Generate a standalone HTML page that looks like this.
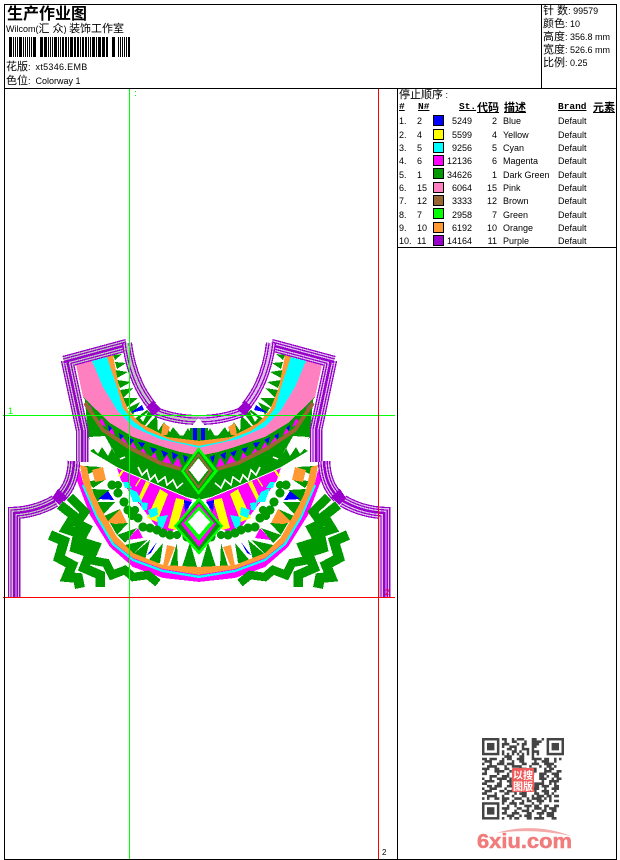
<!DOCTYPE html>
<html lang="zh">
<head>
<meta charset="utf-8">
<title>生产作业图</title>
<style>
html,body{margin:0;padding:0;background:#fff}
#p{position:relative;width:620px;height:860px;overflow:hidden;background:#fff;color:#000;font:9px/12px "Liberation Sans","WenQuanYi Zen Hei","Noto Sans CJK SC",sans-serif}
#p>div,#p>svg{position:absolute}
.l{background:#000}
.t{white-space:nowrap}
.c{font-size:11px}
.r{text-align:right}
.h{font:bold 9.5px/12px "Liberation Mono","WenQuanYi Zen Hei","Noto Sans CJK SC",monospace;text-decoration:underline;white-space:nowrap}
.h .c{font-family:"WenQuanYi Zen Hei","Noto Sans CJK SC",sans-serif;font-size:11px}
.s{width:9px;height:9px;border:1px solid #000}
</style>
</head>
<body>
<div id="p">
<svg style="left:0;top:0" width="620" height="860" viewBox="0 0 620 860">
<defs>
<g id="st" fill="none" stroke-linejoin="miter" stroke-miterlimit="6">
<path d="M64,362 L127,345"/>
<path d="M67,360 L82,430 L82,462"/>
<path d="M74,461 Q73,485 60,497"/>
<path d="M14,597 L14,513 Q36,512 55,501"/>
</g>
<g id="st2" fill="none" stroke-linejoin="miter" stroke-miterlimit="6">
<path d="M127,343 Q132,382 152,406"/>
<path d="M156,412 Q176,420 199,420"/>
</g>
<g id="art" shape-rendering="crispEdges">
<!-- neck teeth -->
<g fill="#009900">
<polygon points="113,355 122,354 115,360"/>
<polygon points="115,362 126,363 117,369"/>
<polygon points="115,370 128,372 117,378"/>
<polygon points="117,380 131,382 120,388"/>
<polygon points="120,390 133,388 123,398"/>
<polygon points="123,398 138,398 127,407"/>
<polygon points="128,408 140,402 133,415"/>
<polygon points="133,420 147,410 153,415 143,428"/>
<polygon points="143,430 157,415 158,434"/>
<polygon points="156,434 164,422 172,436"/>
<polygon points="168,436 173,427 182,438"/>
<polygon points="182,438 188,428 195,440"/>
<polygon points="160,435 200,436 200,442 170,439"/>
<polygon points="190,428 200,428 200,442 190,442"/>
</g>
<polygon points="130,413 142,405 144,410" fill="#0000ff"/>
<polygon points="193,428 197,428 197,440 193,440" fill="#0000ff"/>
<polygon points="161,435 163,423 170,427 167,435" fill="#ff9933"/>
<polygon points="140,418 148,412 143,422" fill="#fff"/>
<!-- big green -->
<polygon points="85,400 83,397 110,423 133,437 163,447 180,452 200,456 200,500 187,497 163,487 130,473 117,467 90,451 95,448 88,437" fill="#009900"/>
<polygon points="89,437 105,436 116,456 112,448 108,456 102,447 98,454 92,447" fill="#fff"/>
<!-- yoke bands -->
<polygon points="76,365 92,361 103,387 117,410 133,427 160,438 200,447 200,456 180,452 163,447 133,437 110,423 83,397" fill="#ff80c0"/>
<polygon points="92,361 107,357 117,387 123,408 133,420 147,430 173,440 200,445 200,448 160,439 133,427 117,410 103,387" fill="#00ffff"/>
<polygon points="107,357 113,355 119,387 128,410 140,423 167,437 200,441 200,446 173,441 147,431 133,421 123,408 117,387" fill="#ff9933"/>
<!-- magenta triangles -->
<g fill="#ff00ff">
<polygon points="87,410 90,405 94,414"/>
<polygon points="98,423 102,418 106,427"/>
<polygon points="108,433 112,428 115,435"/>
<polygon points="120,442 123,437 128,444"/>
<polygon points="130,447 133,442 138,451"/>
<polygon points="139,453 143,448 148,456"/>
<polygon points="150,458 155,452 158,461"/>
<polygon points="162,462 167,455 172,464"/>
<polygon points="173,465 178,457 182,467"/>
</g>
<g fill="#0000ff">
<polygon points="108,425 112,428 109,431"/>
<polygon points="119,433 124,436 120,439"/>
<polygon points="128,437 134,440 130,444"/>
<polygon points="138,442 145,443 142,448"/>
<polygon points="150,447 157,449 153,453"/>
<polygon points="161,450 168,453 164,457"/>
<polygon points="172,452 178,455 173,460"/>
<polygon points="183,455 188,457 185,463"/>
</g>
<polyline points="85,403 103,430 130,448 160,463 181,469" fill="none" stroke="#996633" stroke-width="4"/>
<polyline points="138,467 142,475 147,470 150,480 155,475 158,482 165,477 167,485 173,480 177,488 183,483" fill="none" stroke="#fff" stroke-width="1.6"/>
<line x1="120" y1="459" x2="125" y2="457" stroke="#fff" stroke-width="1.6"/>
<!-- fan -->
<polygon points="117,468 121,480 128,490 140,505 155,525 170,532 178,528 187,512 192,500 187,498 163,488 130,474" fill="#ff00ff"/>
<g fill="#ffff00">
<polygon points="176,498 185,500 176,530 168,528"/>
<polygon points="160,489 168,494 157,522 147,518"/>
<polygon points="146,481 150,483 140,503 137,501"/>
<polygon points="118,476 122,470 124,471 120,477"/>
<polygon points="135,486 140,478 141,479 136,487"/>
</g>
<g fill="#00ffff">
<polygon points="123,482 128,482 132,488 125,488"/>
<polygon points="128,488 137,492 142,502 133,502"/>
<polygon points="140,502 148,503 147,510 143,510"/>
<polygon points="148,510 157,507 158,515 150,518"/>
<polygon points="157,517 168,515 163,528 158,527"/>
</g>
<polygon points="184,500 192,502 185,512" fill="#0000ff"/>
<!-- blobs -->
<g fill="#009900">
<circle cx="112" cy="485" r="4.5"/><circle cx="118" cy="485" r="4"/><circle cx="118" cy="493" r="4.5"/>
<circle cx="124" cy="502" r="4.5"/><circle cx="128" cy="510" r="4.5"/><circle cx="135" cy="510" r="4"/>
<circle cx="132" cy="516" r="4"/><circle cx="138" cy="518" r="4.5"/><circle cx="143" cy="527" r="4.5"/>
<circle cx="150" cy="528" r="4.5"/><circle cx="157" cy="530" r="4.5"/><circle cx="163" cy="533" r="4.5"/>
<circle cx="170" cy="535" r="4.5"/><circle cx="177" cy="535" r="4"/><circle cx="187" cy="537" r="4.5"/>
</g>
<!-- bib teeth -->
<g fill="#009900">
<polygon points="84,466 101,467 87,475"/>
<polygon points="88,481 105,480 93,488"/>
<polygon points="92,489 110,490 97,502"/>
<polygon points="96,502 115,502 103,515"/>
<polygon points="104,516 120,509 110,523"/>
<polygon points="110,523 128,523 117,535"/>
<polygon points="117,535 137,528 125,543"/>
<polygon points="125,545 147,540 132,555"/>
<polygon points="132,555 150,540 145,560"/>
<polygon points="147,562 163,543 160,563"/>
<polygon points="170,566 177,543 178,567"/>
<polygon points="182,567 190,542 197,567"/>
</g>
<polygon points="92,470 103,467 106,480 95,482" fill="#ff9933"/>
<polygon points="107,522 120,509 127,523 115,524" fill="#ff9933"/>
<polygon points="163,566 167,545 175,547 168,565" fill="#ff9933"/>
<polygon points="98,499 108,491 114,500" fill="#0000ff"/>
<polygon points="147,555 157,542 151,553" fill="#0000ff"/>
<polygon points="127,540 138,528 143,538" fill="#ff00ff"/>
<!-- bib bands -->
<polygon points="76,478 90,515 110,547 133,567 163,578 200,582 200,575 163,568 133,558 113,542 97,515 83,483 80,470" fill="#ff00ff"/>
<polyline points="83,485 97,517 113,544 133,560 163,571 200,577" fill="none" stroke="#00ffff" stroke-width="2.4"/>
<polygon points="80,465 87,467 92,490 100,507 117,537 133,553 163,565 200,567 200,575 163,569 133,558 113,542 97,515 83,483" fill="#ff9933"/>
<!-- zigzags -->
<g fill="none" stroke="#009900" stroke-linejoin="miter" stroke-miterlimit="4">
<polyline stroke-width="8.5" points="70,497 85,512 77,523 87,528 80,541 96,546 90,560 106,563 112,575 125,570 133,577 148,575 158,583"/>
<polyline stroke-width="9.500" points="60,505 74,516 66,529 78,533 75,548 90,553 84,568 100,575 100,587"/>
<polyline stroke-width="10" points="50,535 64,541 59,558 72,565 67,577 78,578 80,588"/>
</g>
</g>
</defs>

<!-- left half -->
<use href="#art"/>
<!-- right half -->
<g transform="matrix(-1 0 0 1 398 0)"><use href="#art"/></g>

<!-- straps left -->
<g shape-rendering="crispEdges">
<use href="#st" stroke="#9900cc" stroke-width="12.5"/>
<use href="#st" stroke="#c4c4c4" stroke-width="10"/>
<use href="#st" stroke="#9900cc" stroke-width="7.5"/>
<use href="#st" stroke="#c4c4c4" stroke-width="5"/>
<use href="#st" stroke="#9900cc" stroke-width="2.5"/>
<use href="#st2" stroke="#9900cc" stroke-width="10"/>
<use href="#st2" stroke="#c4c4c4" stroke-width="7.5"/>
<use href="#st2" stroke="#9900cc" stroke-width="5"/>
<use href="#st2" stroke="#c4c4c4" stroke-width="2.5"/>
</g>
<!-- straps right -->
<g transform="matrix(-1 0 0 1 398 0)" shape-rendering="crispEdges">
<use href="#st" stroke="#9900cc" stroke-width="12.5"/>
<use href="#st" stroke="#dcc0ea" stroke-width="10"/>
<use href="#st" stroke="#9900cc" stroke-width="7.5"/>
<use href="#st" stroke="#dcc0ea" stroke-width="5"/>
<use href="#st" stroke="#9900cc" stroke-width="2.5"/>
<use href="#st2" stroke="#9900cc" stroke-width="10"/>
<use href="#st2" stroke="#dcc0ea" stroke-width="7.5"/>
<use href="#st2" stroke="#9900cc" stroke-width="5"/>
<use href="#st2" stroke="#dcc0ea" stroke-width="2.5"/>
</g>
<g fill="#9900cc" shape-rendering="crispEdges">
<polygon points="146,407 153,401 161,409 153,416"/>
<polygon points="252,407 245,401 237,409 245,416"/>
<polygon points="52,498 58,489 67,497 59,505"/>
<polygon points="346,498 340,489 331,497 339,505"/>
</g>
<polygon points="190,428 198.500,418 207,428" fill="#fff" shape-rendering="crispEdges"/>

<!-- diamonds -->
<g shape-rendering="crispEdges">
<polygon points="198.500,447 218,471 198.500,495 181,471" fill="#00ff00"/>
<polygon points="198.500,451 214,471 198.500,491 184,471" fill="#009900"/>
<polygon points="198.500,453 212,471 198.500,489 185,471" fill="#996633"/>
<polygon points="198.500,456 209,471 198.500,486 188,471" fill="#009900"/>
<polygon points="198.500,458 208,470 198.500,482 189,470" fill="#fff"/>
<polygon points="199,497 223,526 199,555 174,526" fill="#00ff00"/>
<polygon points="199,501 220,526 199,551 177,526" fill="#009900"/>
<polygon points="199,503 216,524 199,547 181,524" fill="#ff00ff"/>
<polygon points="199,506 214,523 199,541 184,523" fill="#00ff00"/>
<polygon points="199,510 210,522 199,535 188,522" fill="#fff"/>
</g>

<!-- guide lines -->
<g shape-rendering="crispEdges">
<rect x="129" y="89" width="1" height="770" fill="#00ff00"/>
<rect x="3" y="415" width="392" height="1" fill="#00ff00"/>
<rect x="3" y="597" width="392" height="1" fill="#ff0000"/>
<rect x="378" y="89" width="1" height="770" fill="#ff0000"/>
<rect x="135" y="91" width="1" height="1" fill="#00ff00"/>
<rect x="135" y="95" width="1" height="1" fill="#00ff00"/>
</g>

<!-- barcode -->
<path shape-rendering="crispEdges" fill="none" stroke="#000" stroke-width="20" d="M9 47h3M13 47h1M15 47h1M17 47h1M19 47h3M23 47h1M25 47h1M27 47h1M29 47h1M31 47h1M33 47h3M40 47h3M44 47h3M48 47h1M50 47h1M52 47h1M54 47h3M58 47h1M60 47h1M62 47h2M65 47h2M68 47h1M70 47h3M74 47h2M77 47h2M80 47h1M82 47h2M85 47h2M88 47h1M90 47h1M92 47h3M96 47h1M98 47h3M102 47h3M106 47h2M112 47h3M118 47h1M120 47h1M122 47h1M124 47h1M126 47h1M128 47h2"/>
</svg>

<!-- frame -->
<div class="l" style="left:4px;top:4px;width:613px;height:1px"></div>
<div class="l" style="left:4px;top:859px;width:613px;height:1px"></div>
<div class="l" style="left:4px;top:4px;width:1px;height:856px"></div>
<div class="l" style="left:616px;top:4px;width:1px;height:856px"></div>
<div class="l" style="left:4px;top:88px;width:613px;height:1px"></div>
<div class="l" style="left:541px;top:4px;width:1px;height:84px"></div>
<div class="l" style="left:397px;top:88px;width:1px;height:772px"></div>
<div class="l" style="left:397px;top:247px;width:220px;height:1px"></div>

<!-- header left -->
<div class="t" style="left:7px;top:3px;font-size:16px;line-height:18px;font-weight:bold;font-family:'Noto Sans CJK SC',sans-serif">生产作业图</div>
<div class="t" style="left:6px;top:23px">Wilcom(<span class="c">汇 众</span>) <span class="c">装饰工作室</span></div>
<div class="t" style="left:6px;top:61px"><span class="c">花版</span>: &nbsp;<span style="letter-spacing:.3px">xt5346.EMB</span></div>
<div class="t" style="left:6px;top:75px"><span class="c">色位</span>: &nbsp;Colorway 1</div>

<!-- header right -->
<div class="t" style="left:543px;top:5px"><span class="c">针 数</span>: 99579</div>
<div class="t" style="left:543px;top:18px"><span class="c">颜色</span>: 10</div>
<div class="t" style="left:543px;top:31px"><span class="c">高度</span>: 356.8 mm</div>
<div class="t" style="left:543px;top:44px"><span class="c">宽度</span>: 526.6 mm</div>
<div class="t" style="left:543px;top:57px"><span class="c">比例</span>: 0.25</div>

<!-- table header -->
<div class="t" style="left:399px;top:89px"><span class="c">停止顺序</span> :</div>
<div class="h" style="left:399px;top:101px">#</div>
<div class="h" style="left:418px;top:101px">N#</div>
<div class="h" style="left:459px;top:101px">St.</div>
<div class="h" style="left:477px;top:101px"><span class="c">代码</span></div>
<div class="h" style="left:504px;top:101px"><span class="c">描述</span></div>
<div class="h" style="left:558px;top:101px">Brand</div>
<div class="h" style="left:593px;top:101px"><span class="c">元素</span></div>

<!-- rows -->
<div class="t" style="left:399px;top:115px">1.</div><div class="t" style="left:417px;top:115px">2</div><div class="s" style="left:433px;top:115px;background:#0000ff"></div><div class="t r" style="left:441px;top:115px;width:31px">5249</div><div class="t r" style="left:477px;top:115px;width:20px">2</div><div class="t" style="left:503px;top:115px">Blue</div><div class="t" style="left:558px;top:115px">Default</div>
<div class="t" style="left:399px;top:129px">2.</div><div class="t" style="left:417px;top:129px">4</div><div class="s" style="left:433px;top:129px;background:#ffff00"></div><div class="t r" style="left:441px;top:129px;width:31px">5599</div><div class="t r" style="left:477px;top:129px;width:20px">4</div><div class="t" style="left:503px;top:129px">Yellow</div><div class="t" style="left:558px;top:129px">Default</div>
<div class="t" style="left:399px;top:142px">3.</div><div class="t" style="left:417px;top:142px">5</div><div class="s" style="left:433px;top:142px;background:#00ffff"></div><div class="t r" style="left:441px;top:142px;width:31px">9256</div><div class="t r" style="left:477px;top:142px;width:20px">5</div><div class="t" style="left:503px;top:142px">Cyan</div><div class="t" style="left:558px;top:142px">Default</div>
<div class="t" style="left:399px;top:155px">4.</div><div class="t" style="left:417px;top:155px">6</div><div class="s" style="left:433px;top:155px;background:#ff00ff"></div><div class="t r" style="left:441px;top:155px;width:31px">12136</div><div class="t r" style="left:477px;top:155px;width:20px">6</div><div class="t" style="left:503px;top:155px">Magenta</div><div class="t" style="left:558px;top:155px">Default</div>
<div class="t" style="left:399px;top:169px">5.</div><div class="t" style="left:417px;top:169px">1</div><div class="s" style="left:433px;top:168px;background:#009900"></div><div class="t r" style="left:441px;top:169px;width:31px">34626</div><div class="t r" style="left:477px;top:169px;width:20px">1</div><div class="t" style="left:503px;top:169px">Dark Green</div><div class="t" style="left:558px;top:169px">Default</div>
<div class="t" style="left:399px;top:182px">6.</div><div class="t" style="left:417px;top:182px">15</div><div class="s" style="left:433px;top:182px;background:#ff80c0"></div><div class="t r" style="left:441px;top:182px;width:31px">6064</div><div class="t r" style="left:477px;top:182px;width:20px">15</div><div class="t" style="left:503px;top:182px">Pink</div><div class="t" style="left:558px;top:182px">Default</div>
<div class="t" style="left:399px;top:195px">7.</div><div class="t" style="left:417px;top:195px">12</div><div class="s" style="left:433px;top:195px;background:#996633"></div><div class="t r" style="left:441px;top:195px;width:31px">3333</div><div class="t r" style="left:477px;top:195px;width:20px">12</div><div class="t" style="left:503px;top:195px">Brown</div><div class="t" style="left:558px;top:195px">Default</div>
<div class="t" style="left:399px;top:209px">8.</div><div class="t" style="left:417px;top:209px">7</div><div class="s" style="left:433px;top:208px;background:#00ff00"></div><div class="t r" style="left:441px;top:209px;width:31px">2958</div><div class="t r" style="left:477px;top:209px;width:20px">7</div><div class="t" style="left:503px;top:209px">Green</div><div class="t" style="left:558px;top:209px">Default</div>
<div class="t" style="left:399px;top:222px">9.</div><div class="t" style="left:417px;top:222px">10</div><div class="s" style="left:433px;top:222px;background:#ff9933"></div><div class="t r" style="left:441px;top:222px;width:31px">6192</div><div class="t r" style="left:477px;top:222px;width:20px">10</div><div class="t" style="left:503px;top:222px">Orange</div><div class="t" style="left:558px;top:222px">Default</div>
<div class="t" style="left:399px;top:235px">10.</div><div class="t" style="left:417px;top:235px">11</div><div class="s" style="left:433px;top:235px;background:#9900cc"></div><div class="t r" style="left:441px;top:235px;width:31px">14164</div><div class="t r" style="left:477px;top:235px;width:20px">11</div><div class="t" style="left:503px;top:235px">Purple</div><div class="t" style="left:558px;top:235px">Default</div>

<!-- small marks -->
<div class="t" style="left:8px;top:405px;color:#00ff00">1</div>
<div class="t" style="left:385px;top:587px;color:#ff0000;font-size:8px">2</div>
<div class="t" style="left:382px;top:847px;font-size:8px">2</div>

<!-- QR -->
<svg style="left:482px;top:738px;filter:blur(.35px)" width="82" height="84" viewBox="0 0 33 34" preserveAspectRatio="none">
<g fill="none" stroke="#444" stroke-width="1">
<rect x=".5" y=".5" width="6" height="6"/><rect x="26.500" y=".5" width="6" height="6"/><rect x=".5" y="26.500" width="6" height="6"/>
<path stroke-width="1.05" d="M8 .5h2m2 0h1m1 0h3m3 0h2m2 0h1
M9 1.5h1m2 0h2m3 0h1m2 0h4
M8 2.5h3m3 0h1m1 0h2m2 0h3
M8 3.5h1m2 0h3m2 0h1m3 0h2
M10 4.5h2m1 0h1m2 0h3m1 0h1
M8 5.5h1m3 0h2m1 0h1m2 0h1m1 0h3
M8 6.5h1m1 0h1m1 0h1m1 0h1m1 0h1m1 0h1m1 0h1m1 0h1
M9 7.5h3m3 0h2m3 0h1
M0 8.500h2m1 0h3m2 0h1m1 0h2m2 0h3m3 0h4m1 0h2m2 0h1m1 0h1
M1 9.500h3m3 0h2m3 0h1m2 0h2m4 0h1m2 0h3m2 0h1
M0 10.500h1m2 0h1m2 0h3m1 0h3m3 0h2m2 0h3m2 0h4
M2 11.500h4m3 0h1m2 0h4m3 0h1m3 0h1m2 0h2m1 0h1
M0 12.500h3m2 0h2m2 0h2m4 0h3m2 0h2m3 0h1m1 0h2
M1 13.500h1m3 0h4m2 0h1m8 0h2m3 0h3m2 0h2
M0 14.500h2m4 0h1m3 0h1m9 0h1m2 0h3m2 0h3
M3 15.500h3m2 0h3m12 0h2m1 0h1m2 0h2
M0 16.500h1m2 0h1m2 0h4m1 0h1m11 0h3m2 0h1m1 0h2
M1 17.500h4m2 0h1m2 0h2m12 0h1m2 0h4
M0 18.500h2m4 0h2m3 0h1m9 0h4m2 0h1m1 0h1
M2 19.500h2m1 0h3m2 0h3m8 0h2m1 0h3m2 0h2
M0 20.500h1m2 0h3m3 0h1m2 0h2m6 0h3m2 0h1m2 0h3
M1 21.500h3m3 0h2m1 0h4m2 0h2m3 0h1m2 0h3m2 0h1
M0 22.500h2m3 0h1m3 0h2m2 0h1m1 0h3m3 0h2m2 0h2m1 0h1
M2 23.500h4m2 0h1m3 0h1m3 0h2m2 0h1m1 0h3m1 0h2m1 0h2
M0 24.500h1m1 0h1m2 0h2m1 0h3m2 0h3m2 0h1m1 0h4m1 0h1m1 0h1
M8 25.500h2m2 0h1m3 0h1m1 0h2m2 0h3m2 0h1m1 0h2
M8 26.500h1m2 0h3m1 0h2m3 0h1m2 0h1
M10 27.500h1m2 0h1m3 0h3m1 0h2m2 0h2m2 0h2
M8 28.500h3m3 0h2m2 0h1m2 0h3m1 0h1m1 0h3
M9 29.500h1m3 0h1m2 0h3m1 0h1m3 0h2m2 0h2
M8 30.500h2m2 0h3m3 0h2m2 0h3m1 0h3
M10 31.500h3m2 0h1m1 0h3m3 0h1m2 0h3
M8 32.500h1m2 0h1m1 0h2m3 0h2m1 0h4m3 0h2"/>
</g>
<g fill="#444"><rect x="2" y="2" width="3" height="3"/><rect x="28" y="2" width="3" height="3"/><rect x="2" y="28" width="3" height="3"/></g>
</svg>

<!-- seal -->
<div style="left:512px;top:768px;width:22px;height:24px;background:#ef5a5a;border-radius:1px"></div>
<div style="left:513px;top:769px;width:20px;height:22px;color:#fff;font:bold 10px/11px 'Noto Sans CJK SC',sans-serif;letter-spacing:0">以搜<br>图版</div>

<!-- logo -->
<svg style="left:474px;top:824px;filter:blur(.3px)" width="102" height="28" viewBox="0 0 102 28">
<path d="M22 9 Q60 -2 97 12 Q60 4 22 9z" fill="#f4a8a8"/>
<text x="3" y="24" font-family="Liberation Sans,sans-serif" font-weight="bold" font-size="20" fill="#f07c7c" stroke="#f07c7c" stroke-width=".5" textLength="95" lengthAdjust="spacingAndGlyphs">6xiu.com</text>
</svg>
</div>
</body>
</html>
